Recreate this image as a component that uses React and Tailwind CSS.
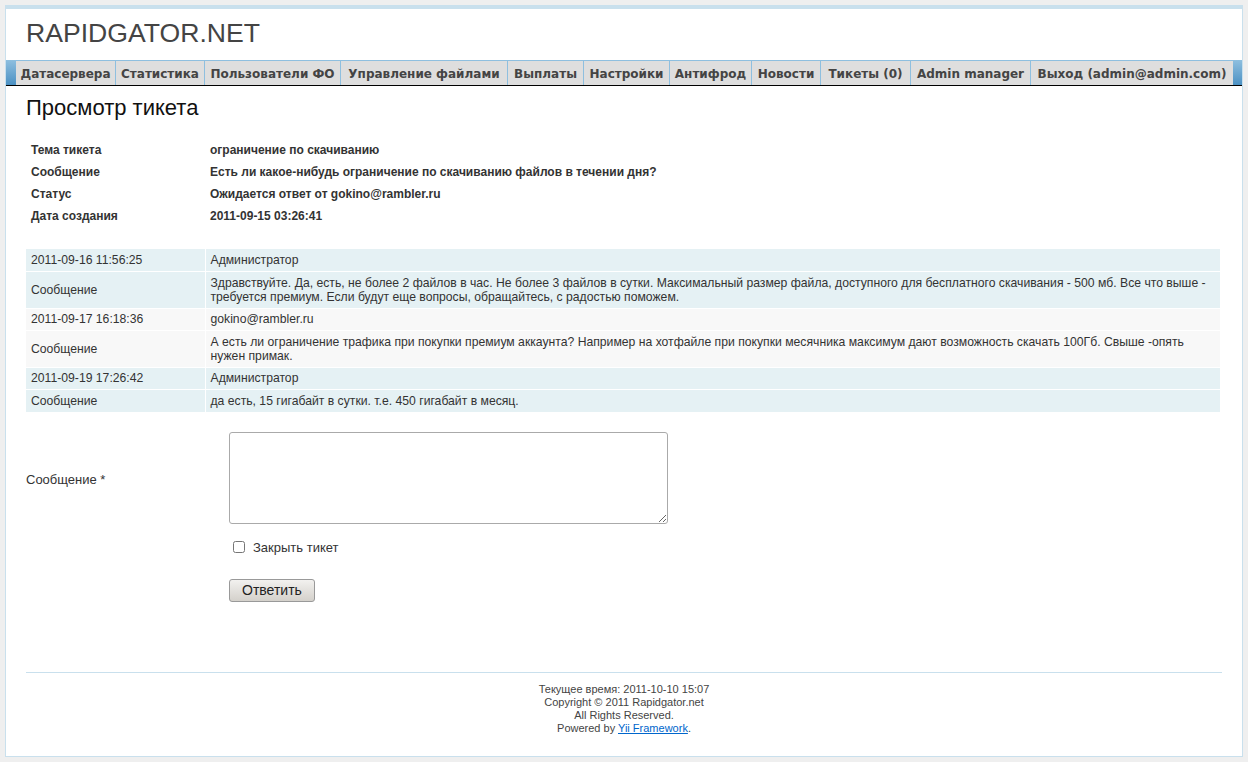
import React from 'react';

const navItems = [
    ['Датасервера', 'w-[100px]'],
    ['Статистика', 'w-[89px]'],
    ['Пользователи ФО', 'w-[136px]'],
    ['Управление файлами', 'w-[167px]'],
    ['Выплаты', 'w-[76px]'],
    ['Настройки', 'w-[86px]'],
    ['Антифрод', 'w-[82px]'],
    ['Новости', 'w-[69px]'],
    ['Тикеты (0)', 'w-[90px]'],
    ['Admin manager', 'w-[120px]'],
    ['Выход (admin@admin.com)', 'w-[202px]'],
];

const details = [
    ['Тема тикета', 'ограничение по скачиванию'],
    ['Сообщение', 'Есть ли какое-нибудь ограничение по скачиванию файлов в течении дня?'],
    ['Статус', 'Ожидается ответ от gokino@rambler.ru'],
    ['Дата создания', '2011-09-15 03:26:41'],
];

const messages = [
    {
        date: '2011-09-16 11:56:25',
        author: 'Администратор',
        text: 'Здравствуйте. Да, есть, не более 2 файлов в час. Не более 3 файлов в сутки. Максимальный размер файла, доступного для бесплатного скачивания - 500 мб. Все что выше - требуется премиум. Если будут еще вопросы, обращайтесь, с радостью поможем.',
        bg: 'bg-[#e5f1f4]',
    },
    {
        date: '2011-09-17 16:18:36',
        author: 'gokino@rambler.ru',
        text: 'А есть ли ограничение трафика при покупки премиум аккаунта? Например на хотфайле при покупки месячника максимум дают возможность скачать 100Гб. Свыше -опять нужен примак.',
        bg: 'bg-[#f8f8f8]',
    },
    {
        date: '2011-09-19 17:26:42',
        author: 'Администратор',
        text: 'да есть, 15 гигабайт в сутки. т.е. 450 гигабайт в месяц.',
        bg: 'bg-[#e5f1f4]',
    },
];

const App = () => {
    return (
        <div className="min-h-[762px] bg-[#efefef] pt-[5px] px-[5px] pb-[6px] font-['Liberation_Sans',Arial,sans-serif] text-[#333]">
            <div className="bg-white border border-[#c9e0ed] border-t-[4px] w-[1238px]">
                {/* header */}
                <div className="h-[51px] pl-[20px] pt-[8px]">
                    <div className="text-[26.6px] leading-[32px] text-[#444]">RAPIDGATOR.NET</div>
                </div>

                {/* main menu */}
                <div className="h-[26px] bg-gradient-to-b from-[#8ebfdf] to-[#4b91c3] border-b border-black pl-[10px]">
                    <ul className="flex h-[25px] w-[1217px] bg-[#dedede] border-t border-[#8ebfdf]">
                        {navItems.map(([item, w], i) => (
                            <li
                                key={item}
                                className={`${w} h-full flex items-center justify-center pt-[2px] whitespace-nowrap font-['DejaVu_Sans',sans-serif] font-bold text-[12px] text-[#444] ${
                                    i < navItems.length - 1 ? 'border-r border-[#8ebfdf]' : ''
                                }`}
                            >
                                {item}
                            </li>
                        ))}
                    </ul>
                </div>

                <div className="px-[20px]">
                    <h1 className="text-[22px] leading-[26px] text-[#111] mt-[9px]">Просмотр тикета</h1>

                    {/* ticket details */}
                    <table className="mt-[18px] text-[12px] font-bold text-[#333]">
                        <tbody>
                            {details.map(([k, v]) => (
                                <tr key={k} className="h-[22px]">
                                    <td className="w-[184px] pl-[5px] align-middle">{k}</td>
                                    <td className="align-middle">{v}</td>
                                </tr>
                            ))}
                        </tbody>
                    </table>

                    {/* messages */}
                    <table className="mt-[22px] w-[1194px] text-[12.2px] leading-[14px] text-[#333] border-collapse">
                        <tbody>
                            {messages.map((m) => (
                                <React.Fragment key={m.date}>
                                    <tr className={`${m.bg} border-b border-white`}>
                                        <td className="w-[179px] px-[5px] h-[22px] border-r border-white">{m.date}</td>
                                        <td className="px-[5px]">{m.author}</td>
                                    </tr>
                                    <tr className={`${m.bg} border-b border-white`}>
                                        <td className="px-[5px] py-[4px] h-[22px] border-r border-white">Сообщение</td>
                                        <td className="px-[5px] py-[4px]">{m.text}</td>
                                    </tr>
                                </React.Fragment>
                            ))}
                        </tbody>
                    </table>

                    {/* reply form */}
                    <div className="flex mt-[19px]">
                        <div className="w-[203px] pt-[38px] text-[13px] text-[#333]">Сообщение *</div>
                        <div className="flex flex-col">
                            <textarea className="w-[439px] h-[92px] border border-[#aaa] rounded-[3px] resize-y outline-none"></textarea>
                            <label className="flex items-center mt-[14px] text-[13px] text-[#333]">
                                <input type="checkbox" className="ml-[4px] w-[12px] h-[12px] mr-[8px]" />
                                Закрыть тикет
                            </label>
                            <div className="mt-[21px]">
                                <button className="h-[23px] px-[12px] text-[14px] text-[#222] border border-[#999] rounded-[3px] bg-gradient-to-b from-[#f2f1ef] to-[#d4d1cb]">
                                    Ответить
                                </button>
                            </div>
                        </div>
                    </div>

                    {/* footer */}
                    <div className="mt-[70px] border-t border-[#c9e0ed] pt-[10px] pb-[21px] text-center text-[11px] leading-[13px] text-[#444]">
                        <div>Текущее время: 2011-10-10 15:07</div>
                        <div>Copyright © 2011 Rapidgator.net</div>
                        <div>All Rights Reserved.</div>
                        <div>
                            Powered by <a href="#" className="text-[#06c] underline">Yii Framework</a>.
                        </div>
                    </div>
                </div>
            </div>
        </div>
    );
};

export default App;
